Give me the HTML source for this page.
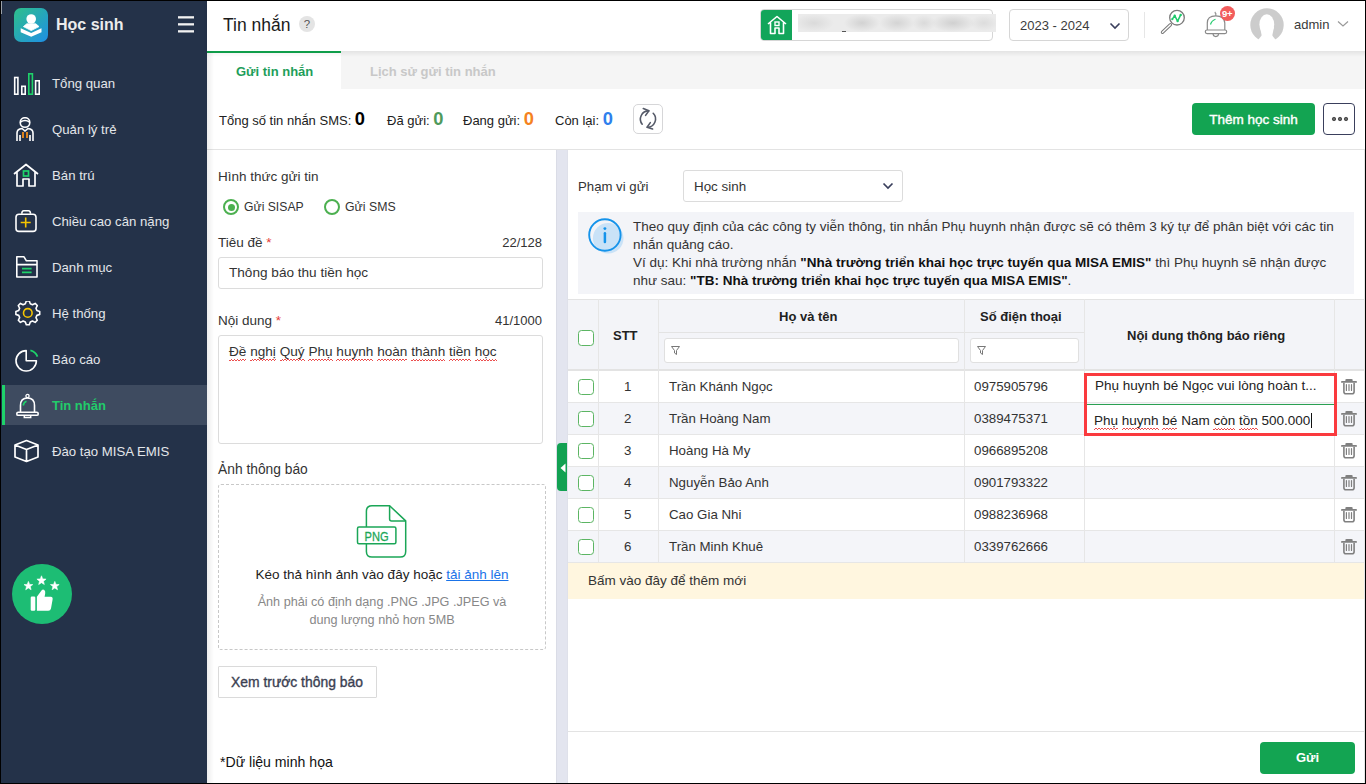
<!DOCTYPE html>
<html><head><meta charset="utf-8">
<style>
*{box-sizing:border-box;margin:0;padding:0}
html,body{width:1366px;height:784px;overflow:hidden;background:#fff}
body{font-family:"Liberation Sans",sans-serif;font-size:13px;color:#212121;position:relative}
.a{position:absolute}
.nw{white-space:nowrap}
#frame{position:absolute;left:0;top:0;width:1366px;height:784px;border:1px solid #000;pointer-events:none;z-index:100}
/* sidebar */
#sb{left:0;top:0;width:207px;height:784px;background:#243249}
.mi{position:absolute;left:0;width:207px;height:40px;color:#e3e6ea;font-size:13.2px}
.mi span{position:absolute;left:52px;top:50%;transform:translateY(-50%);white-space:nowrap}
.mi svg{position:absolute;left:12px;top:8px}
/* header */
#hd{left:207px;top:0;width:1159px;height:51px;background:#fff}
#tabs{left:207px;top:51px;width:1159px;height:38px;background:#f5f5f5}
#stats{left:207px;top:89px;width:1159px;height:61px;background:#fff;border-bottom:1px solid #e3e3e3}
#lp{left:207px;top:150px;width:349px;height:634px;background:#fff}
#split{left:556px;top:150px;width:12px;height:634px;background:#e3e5ef}
#rp{left:568px;top:150px;width:798px;height:634px;background:#fff}
.inp{position:absolute;background:#fff;border:1px solid #dcdcdc;border-radius:3px}
.cb{position:absolute;width:16px;height:16px;border:1.7px solid #5cb563;border-radius:3.5px;background:#fff}
.th{position:absolute;font-weight:bold;font-size:13px;color:#212121;white-space:nowrap}
.row{position:absolute;left:568px;width:798px;height:32px;border-bottom:1px solid #e6e6e6}
.row.g{background:#f4f5f9}
.vl{position:absolute;width:1px;background:#e6e6e6}
.sp{background-image:repeating-linear-gradient(90deg,rgba(232,48,48,.85) 0 1.5px,transparent 1.5px 3px),repeating-linear-gradient(90deg,transparent 0 1.5px,rgba(232,48,48,.85) 1.5px 3px);background-size:100% 1px,100% 1px;background-repeat:no-repeat;background-position:0 100%,0 calc(100% - 1px);padding-bottom:2px}
.cell{position:absolute;white-space:nowrap;font-size:13.3px;color:#333}
</style></head><body>

<!-- SIDEBAR -->
<div id="sb" class="a">
  <div class="a" style="left:14px;top:8px;width:34px;height:34px;border-radius:7px;background:linear-gradient(135deg,#2ec08a 0%,#1e8fe6 100%)">
    <svg width="34" height="34" viewBox="0 0 34 34"><circle cx="17.2" cy="11" r="4.8" fill="#fff"/><path d="M12.8 15.8 H21.8 L25 18.6 L17.2 22.6 L9.4 18.6 Z" fill="#fff" stroke="#fff" stroke-width="0.8" stroke-linejoin="round"/><path d="M6.7 20.2 L17.2 25 L27.5 20.2 V24.2 L17.2 28.8 L6.7 24.2 Z" fill="#fff"/></svg>
  </div>
  <div class="a nw" style="left:56px;top:16px;font-size:16px;font-weight:bold;color:#ececec">Học sinh</div>
  <div class="a" style="left:1px;top:1px;width:1px;height:13px;background:#9aa0a8"></div>
  <svg class="a" style="left:178px;top:15px" width="16" height="18" viewBox="0 0 16 18"><rect x="0" y="1.2" width="16" height="2.3" fill="#f2f2f2"/><rect x="0" y="8.2" width="16" height="2.3" fill="#f2f2f2"/><rect x="0" y="15.2" width="16" height="2.3" fill="#f2f2f2"/></svg>

  <div class="mi" style="top:63px"><svg width="30" height="26" viewBox="0 0 30 26"><g fill="none" stroke="#fff" stroke-width="1.6"><rect x="2.7" y="6.5" width="3.2" height="16.7"/><rect x="9.8" y="15.3" width="3.4" height="7.9"/><rect x="23.6" y="9.8" width="3.6" height="13.4"/></g><rect x="16.8" y="2.8" width="3.6" height="20.4" fill="none" stroke="#1ed26a" stroke-width="1.6"/></svg><span>Tổng quan</span></div>
  <div class="mi" style="top:109px"><svg width="30" height="26" viewBox="0 0 30 26"><g fill="none" stroke="#fff" stroke-width="1.6"><circle cx="13" cy="5.5" r="4.8"/><path d="M8.5 5 Q13 2 17.5 5"/><path d="M5 24 V16 Q5 12 10 11.5 L13 14 L16 11.5 Q21 12 21 16 V24"/><path d="M8 24 V18 M18 24 V18"/></g><path d="M11 15 V21 M15 15 V21" stroke="#f08c1a" stroke-width="1.8"/></svg><span>Quản lý trẻ</span></div>
  <div class="mi" style="top:155px"><svg width="30" height="26" viewBox="0 0 30 26"><path d="M2 11 L14 1.5 L26 11 M5 9 V23 H11 V16 H17 V23 H23 V9" fill="none" stroke="#fff" stroke-width="1.7" stroke-linejoin="round"/><rect x="11.5" y="8" width="5" height="5" fill="none" stroke="#1ed26a" stroke-width="1.7"/></svg><span>Bán trú</span></div>
  <div class="mi" style="top:201px"><svg width="30" height="26" viewBox="0 0 30 26"><rect x="4" y="5.2" width="20" height="17.2" rx="3" fill="none" stroke="#fff" stroke-width="1.6"/><path d="M9.8 4.8 Q9.8 1.8 11.8 1.8 H16.5 Q18.5 1.8 18.5 4.8" fill="none" stroke="#fff" stroke-width="1.6"/><path d="M13.7 8.5 V18.5 M8.7 13.5 H18.7" stroke="#f5c400" stroke-width="1.6"/></svg><span>Chiều cao cân nặng</span></div>
  <div class="mi" style="top:247px"><svg width="30" height="26" viewBox="0 0 30 26"><path d="M4.8 22 V1.8 H12 L14.4 5.8 H25 V22 Z M4.8 9.6 H25" fill="none" stroke="#fff" stroke-width="1.6" stroke-linejoin="round"/><path d="M10 13.6 H19.6 M10 17.4 H19.6" stroke="#1ed26a" stroke-width="1.6"/></svg><span>Danh mục</span></div>
  <div class="mi" style="top:293px"><svg width="30" height="26" viewBox="0 0 30 26"><path d="M14.30 -0.01 L17.30 -0.01 L18.28 2.83 L20.46 3.73 L23.15 2.42 L25.28 4.55 L23.97 7.24 L24.87 9.42 L27.71 10.40 L27.71 13.40 L24.87 14.38 L23.97 16.56 L25.28 19.25 L23.15 21.38 L20.46 20.07 L18.28 20.97 L17.30 23.81 L14.30 23.81 L13.32 20.97 L11.14 20.07 L8.45 21.38 L6.32 19.25 L7.63 16.56 L6.73 14.38 L3.89 13.40 L3.89 10.40 L6.73 9.42 L7.63 7.24 L6.32 4.55 L8.45 2.42 L11.14 3.73 L13.32 2.83Z" fill="none" stroke="#fff" stroke-width="1.6" stroke-linejoin="round"/><circle cx="15.8" cy="11.9" r="4.3" fill="none" stroke="#f5c400" stroke-width="1.6"/></svg><span>Hệ thống</span></div>
  <div class="mi" style="top:339px"><svg width="30" height="26" viewBox="0 0 30 26"><path d="M14.2 3.6 A10.2 10.2 0 1 0 24.4 13.8 H14.2 Z" fill="none" stroke="#fff" stroke-width="1.6" stroke-linejoin="round"/><path d="M18.4 3.3 A10.2 10.2 0 0 1 25.5 9.6" fill="none" stroke="#1ed26a" stroke-width="1.7"/></svg><span>Báo cáo</span></div>
  <div class="a" style="left:2px;top:385px;width:205px;height:40px;background:#3e4b60"></div>
  <div class="a" style="left:2px;top:385px;width:3px;height:40px;background:#1ed26a"></div>
  <div class="mi" style="top:385px;color:#22cc6a;font-weight:bold;font-size:13px"><svg width="30" height="26" viewBox="0 0 30 26"><path d="M8.5 19 V12.5 Q8.5 5 15.5 5 Q22.5 5 22.5 12.5 V19" fill="none" stroke="#fff" stroke-width="1.6"/><rect x="4.8" y="19.3" width="21.4" height="3" rx="1.4" fill="none" stroke="#fff" stroke-width="1.6"/><circle cx="15.5" cy="3" r="1.6" fill="none" stroke="#fff" stroke-width="1.3"/><path d="M12.3 22.5 V24.5 H18.7 V22.5" fill="none" stroke="#fff" stroke-width="1.5"/><path d="M11.2 12.5 Q11.8 9.2 14.5 8.2" fill="none" stroke="#1ed26a" stroke-width="1.7"/></svg><span>Tin nhắn</span></div>
  <div class="mi" style="top:431px"><svg width="30" height="26" viewBox="0 0 30 26"><path d="M3 6 L14.5 1.5 L26 6 V18 L14.5 22.5 L3 18 Z M3 6 L14.5 10.5 L26 6 M14.5 10.5 V22.5" fill="none" stroke="#fff" stroke-width="1.7" stroke-linejoin="round"/></svg><span>Đào tạo MISA EMIS</span></div>

  <div class="a" style="left:12px;top:564px;width:60px;height:60px;border-radius:50%;background:#1dbd74">
    <svg width="60" height="60" viewBox="0 0 60 60"><g fill="#fff" stroke="#fff" stroke-width="0.6" stroke-linejoin="round"><path d="M29.50,11.80 L30.73,14.90 L34.07,15.12 L31.50,17.25 L32.32,20.48 L29.50,18.70 L26.68,20.48 L27.50,17.25 L24.93,15.12 L28.27,14.90Z"/><path d="M16.40,17.40 L17.58,20.38 L20.77,20.58 L18.30,22.62 L19.10,25.72 L16.40,24.00 L13.70,25.72 L14.50,22.62 L12.03,20.58 L15.22,20.38Z"/><path d="M42.80,17.40 L43.98,20.38 L47.17,20.58 L44.70,22.62 L45.50,25.72 L42.80,24.00 L40.10,25.72 L40.90,22.62 L38.43,20.58 L41.62,20.38Z"/></g><g fill="#fff"><rect x="18.7" y="32.5" width="4.6" height="14.2" rx="1.2"/><path d="M24.9 32.8 L29.5 26.5 Q30.8 25 32.3 26 Q33.6 27 33.2 29.5 L32.6 32.8 H38.8 Q41 32.8 40.6 35.5 L39 44.5 Q38.5 46.7 36.3 46.7 H24.9 Z"/></g></svg>
  </div>
</div>

<!-- HEADER -->
<div id="hd" class="a" style="box-shadow:0 1px 3px rgba(0,0,0,.08)">
</div>
<div class="a nw" style="left:223px;top:15px;font-size:17.5px;color:#1a1a1a">Tin nhắn</div>
<div class="a" style="left:299px;top:16px;width:16px;height:16px;border-radius:50%;background:#e4e4e4;color:#555;font-size:11.5px;text-align:center;line-height:16px">?</div>

<div class="a" style="left:760px;top:9px;width:233px;height:32px;border:1px solid #d6d6d6;border-radius:4px;background:#fff;overflow:hidden">
  <div class="a" style="left:-1px;top:-1px;width:32px;height:32px;background:#12a55a;border-radius:4px 0 0 4px"></div>
  <svg class="a" style="left:5px;top:5px" width="22" height="20" viewBox="0 0 22 20"><path d="M2 9 L11 1.5 L20 9 M4.5 7.5 V18.5 H9 V13 H13 V18.5 H17.5 V7.5" fill="none" stroke="#fff" stroke-width="1.6" stroke-linejoin="round"/><rect x="9" y="7" width="4" height="3.5" fill="none" stroke="#fff" stroke-width="1.4"/></svg>
</div>
<div class="a" style="left:798px;top:14px;width:198px;height:18px;background:radial-gradient(ellipse 20px 9px at 16px 9px,#dadada,rgba(236,236,236,0)),radial-gradient(ellipse 18px 9px at 64px 9px,#d2d2d2,rgba(236,236,236,0)),radial-gradient(ellipse 18px 9px at 99px 9px,#d4d4d4,rgba(236,236,236,0)),radial-gradient(ellipse 12px 8px at 126px 9px,#dadada,rgba(236,236,236,0)),radial-gradient(ellipse 22px 9px at 155px 9px,#d0d0d0,rgba(236,236,236,0)),radial-gradient(ellipse 14px 8px at 186px 9px,#dcdcdc,rgba(236,236,236,0)),#ebebeb"></div>
<div class="a" style="left:842px;top:31px;width:4px;height:1px;background:#555"></div>

<div class="a" style="left:1009px;top:9px;width:120px;height:32px;border:1px solid #d6d6d6;border-radius:4px;background:#fff">
  <div class="a nw" style="left:10px;top:8px;font-size:13px;color:#3c3c3c">2023 - 2024</div>
  <svg class="a" style="left:99px;top:12px" width="12" height="8" viewBox="0 0 12 8"><path d="M1.5 1.5 L6 6 L10.5 1.5" fill="none" stroke="#3a3f5c" stroke-width="1.6"/></svg>
</div>
<div class="a" style="left:1144px;top:12px;width:1px;height:26px;background:#e6e6e6"></div>
<svg class="a" style="left:1158px;top:6px" width="28" height="30" viewBox="0 0 28 30"><circle cx="19" cy="11.7" r="7.3" fill="none" stroke="#7a7a7a" stroke-width="1.3"/><path d="M12.4 18.7 L4.5 26.3" stroke="#7a7a7a" stroke-width="3.4" stroke-linecap="round"/><path d="M12.4 18.7 L4.5 26.3" stroke="#fff" stroke-width="1.3" stroke-linecap="round"/><path d="M14.3 13.2 L16.7 9.6 L19.6 15.2 L22.7 8.9" fill="none" stroke="#1ec96a" stroke-width="1.5" stroke-linejoin="round"/><circle cx="14.3" cy="13.2" r="1.1" fill="#1ec96a"/><circle cx="16.7" cy="9.6" r="1.1" fill="#1ec96a"/><circle cx="19.6" cy="15.2" r="1.1" fill="#1ec96a"/><circle cx="22.7" cy="8.9" r="1.2" fill="#1ec96a"/></svg>
<svg class="a" style="left:1203px;top:8px" width="26" height="30" viewBox="0 0 26 30"><path d="M4.3 22 V15 Q4.3 7.8 12.8 7.8 Q21.3 7.8 21.8 15 V22" fill="none" stroke="#8a8a8a" stroke-width="1.2"/><rect x="2.3" y="22" width="21.4" height="3.6" rx="1.8" fill="#fff" stroke="#8a8a8a" stroke-width="1.2"/><path d="M10 25.6 Q10 28.6 12.8 28.6 Q15.6 28.6 15.6 25.6" fill="none" stroke="#8a8a8a" stroke-width="1.1"/><path d="M12.8 7.8 V5.5 Q11.5 5 12.5 4 " fill="none" stroke="#8a8a8a" stroke-width="1.1"/><path d="M7.5 16.5 Q8.5 12.5 12.5 11.2" fill="none" stroke="#1ec96a" stroke-width="1.2"/></svg>
<div class="a" style="left:1219.5px;top:6.2px;width:15.2px;height:15.2px;border-radius:50%;background:#f25c5c;color:#fff;font-size:9.5px;font-weight:bold;text-align:center;line-height:15px;letter-spacing:-0.3px">9+</div>
<svg class="a" style="left:1249.4px;top:6.9px" width="36" height="36" viewBox="0 0 36 36"><defs><mask id="avm"><rect width="36" height="36" fill="#fff"/><ellipse cx="17.8" cy="17.6" rx="7.4" ry="10.3" fill="#000"/><path d="M11 20 L13.8 34 H22.2 L25 20 Z" fill="#000"/><path d="M18 22 L5.7 37 L30 37 Z" fill="#000"/></mask></defs><circle cx="18" cy="18" r="16.7" fill="#cccccc" mask="url(#avm)"/></svg>
<div class="a nw" style="left:1294px;top:17px;font-size:13px;color:#3a3a3a">admin</div>
<svg class="a" style="left:1337px;top:20px" width="12" height="8" viewBox="0 0 12 8"><path d="M1 1.5 L6 6 L11 1.5" fill="none" stroke="#999" stroke-width="1.2"/></svg>

<!-- TABS -->
<div id="tabs" class="a"></div>
<div class="a" style="left:207px;top:51px;width:134px;height:38px;background:#fff;border-top:2px solid #0f9d4a"></div>
<div class="a nw" style="left:236px;top:64px;font-weight:bold;color:#1e9e5a">Gửi tin nhắn</div>
<div class="a nw" style="left:370px;top:64px;font-weight:bold;color:#c8c8c8">Lịch sử gửi tin nhắn</div>

<!-- STATS -->
<div id="stats" class="a"></div>
<div class="a nw" style="left:219px;top:108px;font-size:13px;color:#212121">Tổng số tin nhắn SMS: <b style="font-size:18.3px;color:#000">0</b></div>
<div class="a nw" style="left:387px;top:108px;font-size:13px;color:#212121">Đã gửi: <b style="font-size:18.3px;color:#4f9a5c">0</b></div>
<div class="a nw" style="left:463px;top:108px;font-size:13px;color:#212121">Đang gửi: <b style="font-size:18.3px;color:#f58220">0</b></div>
<div class="a nw" style="left:555px;top:108px;font-size:13px;color:#212121">Còn lại: <b style="font-size:18.3px;color:#2f80ed">0</b></div>
<div class="a" style="left:633px;top:104px;width:30px;height:30px;border:1px solid #d6d6d8;border-radius:5px;background:#fff"><svg class="a" style="left:-1px;top:-1px" width="30" height="30" viewBox="0 0 30 30"><g fill="none" stroke="#555a68" stroke-width="1.6" stroke-linecap="round" stroke-linejoin="round"><path d="M9.2 20.2 A8.2 8.2 0 0 1 15.7 6.9"/><path d="M20.2 9.3 A8.2 8.2 0 0 1 14.3 23.2"/><path d="M10.3 4.6 L15.9 6.8 L12.6 11.4"/><path d="M19.6 25 L14.1 23.2 L17.3 18.6"/></g></svg></div>
<div class="a" style="left:1192px;top:103px;width:123px;height:32px;border-radius:4px;background:#13a452;color:#fff;font-size:13.5px;-webkit-text-stroke:0.4px #fff;text-align:center;line-height:34px">Thêm học sinh</div>
<div class="a" style="left:1323px;top:103px;width:32px;height:32px;border:1px solid #3a3f5c;border-radius:4px;background:#fff">
  <svg class="a" style="left:7px;top:12px" width="18" height="6" viewBox="0 0 18 6"><g fill="#666" stroke="#444" stroke-width="0.9"><circle cx="3" cy="3" r="1.7"/><circle cx="9" cy="3" r="1.7"/><circle cx="15" cy="3" r="1.7"/></g></svg>
</div>


<div class="a" style="left:341px;top:51px;width:1025px;height:6px;background:linear-gradient(180deg,rgba(0,0,0,.07),rgba(0,0,0,0))"></div>
<div class="a" style="left:207px;top:53px;width:134px;height:4px;background:linear-gradient(180deg,rgba(0,0,0,.04),rgba(0,0,0,0))"></div>
<!-- LEFT PANEL -->
<div id="lp" class="a"></div>
<div class="a nw" style="left:218px;top:169px;color:#333;font-size:13.5px">Hình thức gửi tin</div>
<div class="a" style="left:223px;top:199px;width:16px;height:16px;border:2px solid #4cb050;border-radius:50%;background:#fff"><div class="a" style="left:2.5px;top:2.5px;width:7px;height:7px;border-radius:50%;background:#4cb050"></div></div>
<div class="a nw" style="left:244px;top:200px;color:#333;font-size:12.2px">Gửi SISAP</div>
<div class="a" style="left:324px;top:199px;width:16px;height:16px;border:2px solid #4cb050;border-radius:50%;background:#fff"></div>
<div class="a nw" style="left:345px;top:200px;color:#333;font-size:12.3px">Gửi SMS</div>

<div class="a nw" style="left:218px;top:235px;color:#333;font-size:13.5px">Tiêu đề <span style="color:#e53935">*</span></div>
<div class="a nw" style="right:824px;top:235px;color:#333">22/128</div>
<div class="inp" style="left:218px;top:257px;width:325px;height:32px"></div>
<div class="a nw" style="left:229px;top:265px;color:#333;font-size:13.6px">Thông báo thu tiền học</div>

<div class="a nw" style="left:218px;top:313px;color:#333;font-size:13.5px">Nội dung <span style="color:#e53935">*</span></div>
<div class="a nw" style="right:824px;top:313px;color:#333">41/1000</div>
<div class="inp" style="left:218px;top:335px;width:325px;height:109px"></div>
<div class="a nw" style="left:229px;top:344px;color:#333;font-size:13.6px"><span class="sp">Đề</span> <span class="sp">nghị</span> <span class="sp">Quý</span> <span class="sp">Phụ</span> <span class="sp">huynh</span> <span class="sp">hoàn</span> <span class="sp">thành</span> <span class="sp">tiền</span> <span class="sp">học</span></div>

<div class="a nw" style="left:218px;top:462px;color:#333;font-size:13.8px">Ảnh thông báo</div>
<div class="a" style="left:218px;top:484px;width:328px;height:166px;border:1px dashed #c8c8c8;border-radius:3px"></div>
<svg class="a" style="left:355px;top:504px" width="56" height="56" viewBox="0 0 56 56"><g fill="none" stroke="#1ba657" stroke-width="1.5" stroke-linejoin="round"><path d="M34.6 1.7 H17 Q11.4 1.7 11.4 7.3 V47.4 Q11.4 53 17 53 H45.1 Q50.7 53 50.7 47.4 V16.9 Z"/><path d="M34.6 1.7 V14.9 Q34.6 16.9 36.6 16.9 H50.7"/></g><rect x="2.5" y="23.1" width="38.4" height="16.6" rx="1.5" fill="#fff" stroke="#1ba657" stroke-width="1.5"/><text x="9.6" y="36.5" font-family="Liberation Sans" font-size="13.5" fill="#1ba657" textLength="24" lengthAdjust="spacingAndGlyphs" stroke="#1ba657" stroke-width="0.3">PNG</text></svg>
<div class="a nw" style="left:218px;width:328px;text-align:center;top:567px;color:#222;font-size:13.5px">Kéo thả hình ảnh vào đây hoặc <span style="color:#1a73e8;text-decoration:underline">tải ảnh lên</span></div>
<div class="a nw" style="left:218px;top:593px;width:328px;text-align:center;color:#888;line-height:18px;font-size:12.65px">Ảnh phải có định dạng .PNG .JPG .JPEG và<br>dung lượng nhỏ hơn 5MB</div>

<div class="inp" style="left:218px;top:666px;width:159px;height:32px;border-color:#dadada;border-radius:1px"></div>
<div class="a nw" style="left:231px;top:674px;color:#3b3f52;font-size:13.9px;-webkit-text-stroke:0.35px #3b3f52">Xem trước thông báo</div>
<div class="a nw" style="left:220px;top:754px;color:#111;font-size:14.1px">*Dữ liệu minh họa</div>

<!-- SPLITTER -->
<div id="split" class="a"></div>
<div class="a" style="left:556px;top:150px;width:1px;height:634px;background:#dadce6"></div>
<div class="a" style="left:567px;top:150px;width:1px;height:634px;background:#dfe1ea"></div>
<div class="a" style="left:557px;top:443px;width:10px;height:48px;background:#12a152;border-radius:4px 0 0 4px"></div>
<svg class="a" style="left:559.5px;top:462.5px" width="6" height="10" viewBox="0 0 6 10"><path d="M5.5 0.5 L0.5 5 L5.5 9.5 Z" fill="#fff"/></svg>

<!-- RIGHT PANEL -->
<div id="rp" class="a"></div>
<div class="a nw" style="left:578px;top:179px;color:#333;font-size:13.2px">Phạm vi gửi</div>
<div class="inp" style="left:683px;top:170px;width:220px;height:32px"></div>
<div class="a nw" style="left:694px;top:179px;color:#333;font-size:13.4px">Học sinh</div>
<svg class="a" style="left:882px;top:182px" width="12" height="8" viewBox="0 0 12 8"><path d="M1.5 1.5 L6 6 L10.5 1.5" fill="none" stroke="#3a3f5c" stroke-width="1.7"/></svg>

<div class="a" style="left:578px;top:212px;width:776px;height:82px;background:#f3f4f8"></div>
<svg class="a" style="left:584px;top:214px" width="44" height="44" viewBox="0 0 44 44"><circle cx="24.2" cy="24.3" r="15.3" fill="#c9e2f7"/><circle cx="20.9" cy="21" r="15.7" fill="none" stroke="#1593ea" stroke-width="1.9"/><path d="M20.9 19.3 V28.1" stroke="#1593ea" stroke-width="2.5" stroke-linecap="round"/><circle cx="20.9" cy="14.6" r="1.45" fill="#1593ea"/></svg>
<div class="a nw" style="left:633px;top:218px;line-height:18px;color:#333;font-size:13.5px">Theo quy định của các công ty viễn thông, tin nhắn Phụ huynh nhận được sẽ có thêm 3 ký tự để phân biệt với các tin<br>nhắn quảng cáo.<br>Ví dụ: Khi nhà trường nhắn <b style="color:#111">"Nhà trường triển khai học trực tuyến qua MISA EMIS"</b> thì Phụ huynh sẽ nhận được<br>như sau: <b style="color:#111">"TB: Nhà trường triển khai học trực tuyến qua MISA EMIS"</b>.</div>

<!-- TABLE -->
<div class="a" style="left:568px;top:299px;width:797px;height:72px;background:#f3f4f8;border-top:1px solid #e3e3e3;border-bottom:2px solid #e3e3e3"></div>
<div class="a" style="left:658px;top:332px;width:426px;height:1px;background:#e3e3e3"></div>
<div class="cb" style="left:578px;top:330px"></div>
<div class="th" style="left:613px;top:328px">STT</div>
<div class="th" style="left:779px;top:309px">Họ và tên</div>
<div class="th" style="left:980px;top:309px">Số điện thoại</div>
<div class="th" style="left:1127px;top:328px">Nội dung thông báo riêng</div>
<div class="inp" style="left:664px;top:338px;width:295px;height:25px;border-color:#e0e0e0"></div>
<div class="inp" style="left:970px;top:338px;width:109px;height:25px;border-color:#e0e0e0"></div>
<svg class="a" style="left:671px;top:346px" width="9" height="9" viewBox="0 0 9 9"><path d="M0.5 0.5 H8.5 L5.5 4.5 V8.5 L3.5 7 V4.5 Z" fill="none" stroke="#777" stroke-width="1"/></svg>
<svg class="a" style="left:977px;top:346px" width="9" height="9" viewBox="0 0 9 9"><path d="M0.5 0.5 H8.5 L5.5 4.5 V8.5 L3.5 7 V4.5 Z" fill="none" stroke="#777" stroke-width="1"/></svg>

<div class="row" style="top:371px"></div>
<div class="row g" style="top:403px"></div>
<div class="row" style="top:435px"></div>
<div class="row g" style="top:467px"></div>
<div class="row" style="top:499px"></div>
<div class="row g" style="top:531px"></div>

<div class="vl" style="left:598px;top:299px;height:264px"></div>
<div class="vl" style="left:658px;top:299px;height:264px"></div>
<div class="vl" style="left:964px;top:299px;height:264px"></div>
<div class="vl" style="left:1084px;top:299px;height:264px"></div>
<div class="vl" style="left:1334px;top:299px;height:264px"></div>
<div class="vl" style="left:1364px;top:150px;height:634px"></div>

<div class="cb" style="left:578px;top:379px"></div>
<div class="cb" style="left:578px;top:411px"></div>
<div class="cb" style="left:578px;top:443px"></div>
<div class="cb" style="left:578px;top:475px"></div>
<div class="cb" style="left:578px;top:507px"></div>
<div class="cb" style="left:578px;top:539px"></div>

<div class="cell" style="left:624px;top:379px">1</div>
<div class="cell" style="left:624px;top:411px">2</div>
<div class="cell" style="left:624px;top:443px">3</div>
<div class="cell" style="left:624px;top:475px">4</div>
<div class="cell" style="left:624px;top:507px">5</div>
<div class="cell" style="left:624px;top:539px">6</div>

<div class="cell" style="left:669px;top:379px">Trần Khánh Ngọc</div>
<div class="cell" style="left:669px;top:411px">Trần Hoàng Nam</div>
<div class="cell" style="left:669px;top:443px">Hoàng Hà My</div>
<div class="cell" style="left:669px;top:475px">Nguyễn Bảo Anh</div>
<div class="cell" style="left:669px;top:507px">Cao Gia Nhi</div>
<div class="cell" style="left:669px;top:539px">Trần Minh Khuê</div>

<div class="cell" style="left:974px;top:379px">0975905796</div>
<div class="cell" style="left:974px;top:411px">0389475371</div>
<div class="cell" style="left:974px;top:443px">0966895208</div>
<div class="cell" style="left:974px;top:475px">0901793322</div>
<div class="cell" style="left:974px;top:507px">0988236968</div>
<div class="cell" style="left:974px;top:539px">0339762666</div>

<div class="a" style="left:1085px;top:404px;width:250px;height:30px;border:1px solid #2aa052;background:#fff"></div>
<div class="cell" style="left:1095px;top:378px;color:#222;font-size:13.5px">Phụ huynh bé Ngọc vui lòng hoàn t...</div>
<div class="cell" style="left:1094px;top:413px;color:#222;font-size:13.5px"><span class="sp">Phụ</span> <span class="sp">huynh</span> <span class="sp">bé</span> Nam <span class="sp">còn</span> <span class="sp">tồn</span> 500.000<span style="display:inline-block;width:1px;height:15px;background:#111;vertical-align:-3px;margin-left:1px"></span></div>
<div class="a" style="left:1084px;top:373px;width:253px;height:63px;border:3px solid #fa3a3e"></div>

<!-- trash icons -->
<svg class="a" style="left:1341px;top:377px" width="16" height="19" viewBox="0 0 16 19"><path d="M0.9 4.9 H15.1" stroke="#808080" stroke-width="1.8" stroke-linecap="round"/><path d="M4.1 4.5 L4.6 2.6 Q4.8 2.1 5.4 2.1 H10.6 Q11.2 2.1 11.4 2.6 L11.9 4.5 Z" fill="#808080"/><path d="M2.9 5.7 V14.7 Q2.9 16.7 4.9 16.7 H11.1 Q13.1 16.7 13.1 14.7 V5.7" fill="none" stroke="#808080" stroke-width="1.6"/><path d="M5.4 7.6 V13.5 M8 7.6 V13.5 M10.5 7.6 V13.5" stroke="#808080" stroke-width="1.2" stroke-linecap="round"/></svg>
<svg class="a" style="left:1341px;top:409px" width="16" height="19" viewBox="0 0 16 19"><path d="M0.9 4.9 H15.1" stroke="#808080" stroke-width="1.8" stroke-linecap="round"/><path d="M4.1 4.5 L4.6 2.6 Q4.8 2.1 5.4 2.1 H10.6 Q11.2 2.1 11.4 2.6 L11.9 4.5 Z" fill="#808080"/><path d="M2.9 5.7 V14.7 Q2.9 16.7 4.9 16.7 H11.1 Q13.1 16.7 13.1 14.7 V5.7" fill="none" stroke="#808080" stroke-width="1.6"/><path d="M5.4 7.6 V13.5 M8 7.6 V13.5 M10.5 7.6 V13.5" stroke="#808080" stroke-width="1.2" stroke-linecap="round"/></svg>
<svg class="a" style="left:1341px;top:441px" width="16" height="19" viewBox="0 0 16 19"><path d="M0.9 4.9 H15.1" stroke="#808080" stroke-width="1.8" stroke-linecap="round"/><path d="M4.1 4.5 L4.6 2.6 Q4.8 2.1 5.4 2.1 H10.6 Q11.2 2.1 11.4 2.6 L11.9 4.5 Z" fill="#808080"/><path d="M2.9 5.7 V14.7 Q2.9 16.7 4.9 16.7 H11.1 Q13.1 16.7 13.1 14.7 V5.7" fill="none" stroke="#808080" stroke-width="1.6"/><path d="M5.4 7.6 V13.5 M8 7.6 V13.5 M10.5 7.6 V13.5" stroke="#808080" stroke-width="1.2" stroke-linecap="round"/></svg>
<svg class="a" style="left:1341px;top:473px" width="16" height="19" viewBox="0 0 16 19"><path d="M0.9 4.9 H15.1" stroke="#808080" stroke-width="1.8" stroke-linecap="round"/><path d="M4.1 4.5 L4.6 2.6 Q4.8 2.1 5.4 2.1 H10.6 Q11.2 2.1 11.4 2.6 L11.9 4.5 Z" fill="#808080"/><path d="M2.9 5.7 V14.7 Q2.9 16.7 4.9 16.7 H11.1 Q13.1 16.7 13.1 14.7 V5.7" fill="none" stroke="#808080" stroke-width="1.6"/><path d="M5.4 7.6 V13.5 M8 7.6 V13.5 M10.5 7.6 V13.5" stroke="#808080" stroke-width="1.2" stroke-linecap="round"/></svg>
<svg class="a" style="left:1341px;top:505px" width="16" height="19" viewBox="0 0 16 19"><path d="M0.9 4.9 H15.1" stroke="#808080" stroke-width="1.8" stroke-linecap="round"/><path d="M4.1 4.5 L4.6 2.6 Q4.8 2.1 5.4 2.1 H10.6 Q11.2 2.1 11.4 2.6 L11.9 4.5 Z" fill="#808080"/><path d="M2.9 5.7 V14.7 Q2.9 16.7 4.9 16.7 H11.1 Q13.1 16.7 13.1 14.7 V5.7" fill="none" stroke="#808080" stroke-width="1.6"/><path d="M5.4 7.6 V13.5 M8 7.6 V13.5 M10.5 7.6 V13.5" stroke="#808080" stroke-width="1.2" stroke-linecap="round"/></svg>
<svg class="a" style="left:1341px;top:537px" width="16" height="19" viewBox="0 0 16 19"><path d="M0.9 4.9 H15.1" stroke="#808080" stroke-width="1.8" stroke-linecap="round"/><path d="M4.1 4.5 L4.6 2.6 Q4.8 2.1 5.4 2.1 H10.6 Q11.2 2.1 11.4 2.6 L11.9 4.5 Z" fill="#808080"/><path d="M2.9 5.7 V14.7 Q2.9 16.7 4.9 16.7 H11.1 Q13.1 16.7 13.1 14.7 V5.7" fill="none" stroke="#808080" stroke-width="1.6"/><path d="M5.4 7.6 V13.5 M8 7.6 V13.5 M10.5 7.6 V13.5" stroke="#808080" stroke-width="1.2" stroke-linecap="round"/></svg>

<div class="a" style="left:568px;top:563px;width:796px;height:36px;background:#fff6df"></div>
<div class="a nw" style="left:588px;top:573px;color:#333;font-size:13.5px">Bấm vào đây để thêm mới</div>

<div class="a" style="left:568px;top:731px;width:796px;height:1px;background:#e3e3e3"></div>
<div class="a" style="left:1260px;top:742px;width:95px;height:32px;border-radius:4px;background:#13a452;color:#fff;font-weight:bold;text-align:center;line-height:32px">Gửi</div>

<div class="a" style="left:207px;top:51px;width:7px;height:733px;background:linear-gradient(90deg,rgba(0,0,0,.07),rgba(0,0,0,0));z-index:50"></div>
<div id="frame"></div>
</body></html>
